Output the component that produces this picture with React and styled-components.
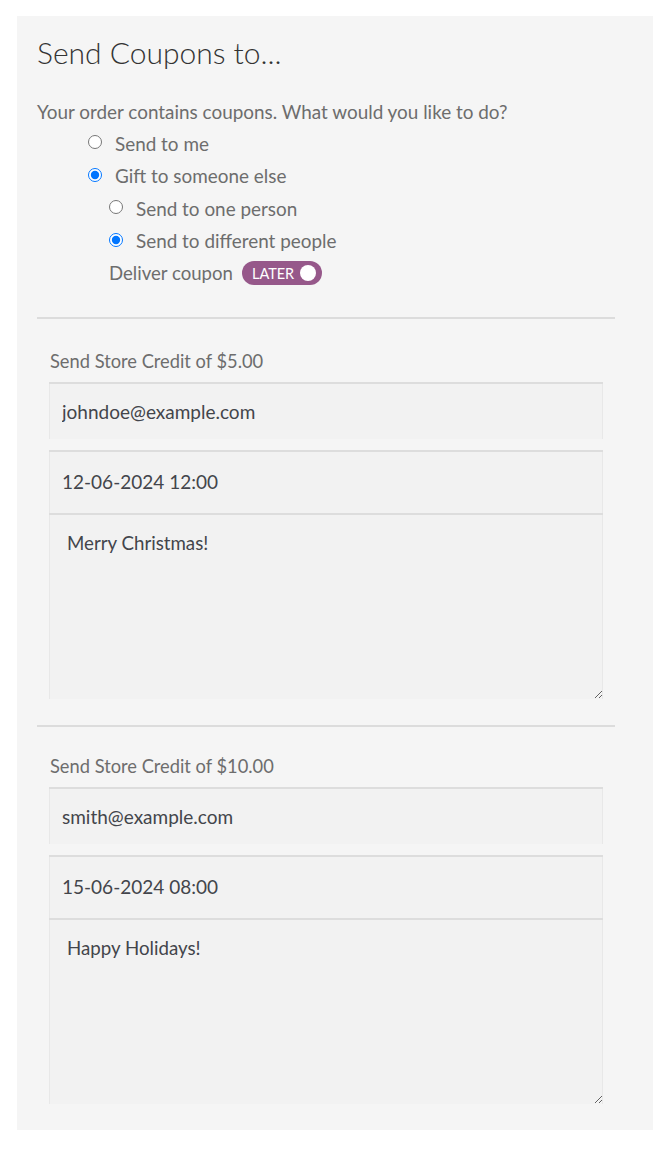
import React, { useState } from 'react';
import styled, { createGlobalStyle } from 'styled-components';

const GlobalStyle = createGlobalStyle`
  body {
    margin: 0;
    background: #ffffff;
    font-family: Lato, "Liberation Sans", sans-serif;
  }
`;

const Page = styled.div`
  padding: 16px 18px 21px 17px;
`;

const Panel = styled.div`
  background: #f5f5f5;
  padding: 18px 20px 26px 20px;
`;

const Title = styled.h2`
  margin: 0 0 30px;
  font-size: 30px;
  font-weight: 300;
  line-height: 36px;
  color: #333333;
`;

const Intro = styled.p`
  margin: 0 0 3px;
  font-size: 18.9px;
  line-height: 24px;
  color: #6d6d6d;
`;

const OptionList = styled.div`
  display: flex;
  flex-direction: column;
  padding-left: ${props => props.indent}px;
`;

const OptionRow = styled.label`
  display: flex;
  align-items: center;
  height: 32.5px;
  font-size: 18.9px;
  color: #6d6d6d;
  cursor: pointer;

  & input {
    margin: 0 13px 2px 0;
    width: 14px;
    height: 14px;
  }
`;

const DeliverRow = styled.div`
  display: flex;
  align-items: center;
  gap: 9px;
  height: 32px;
  font-size: 18.6px;
  color: #6d6d6d;
`;

const Toggle = styled.button`
  display: flex;
  align-items: center;
  justify-content: space-between;
  width: 80px;
  height: 24px;
  border: 0;
  border-radius: 12px;
  background: #96588a;
  padding: 0 6px 0 10px;
  color: #ffffff;
  font-family: Lato, "Liberation Sans", sans-serif;
  font-size: 14.5px;
  text-transform: uppercase;
  cursor: pointer;

  & span.knob {
    width: 16px;
    height: 16px;
    border-radius: 50%;
    background: #ffffff;
  }
`;

const Section = styled.div`
  margin: ${props => (props.first ? '28px' : '26px')} 18px 0 0;
  border-top: 2px solid #dcdcdc;
  padding: ${props => (props.first ? '30px' : '27px')} 12px 0;
  display: flex;
  flex-direction: column;
`;

const FieldLabel = styled.div`
  font-size: 18.3px;
  line-height: 24px;
  color: #6d6d6d;
  padding-left: 1px;
  margin-bottom: 9px;
`;

const TextField = styled.input`
  box-sizing: border-box;
  width: 100%;
  height: ${props => props.h}px;
  margin-bottom: ${props => props.gap}px;
  border: 0;
  border-top: 2px solid #dddddd;
  box-shadow: inset 1px 0 0 #e8e8e8, inset -1px 0 0 #e8e8e8;
  background: #f2f2f2;
  padding: 0 13px ${props => props.lift}px;
  font-family: Lato, "Liberation Sans", sans-serif;
  font-size: 19px;
  color: #43454b;
  outline: none;
`;

const MessageField = styled.textarea`
  box-sizing: border-box;
  width: 100%;
  height: 186px;
  margin: 0;
  border: 0;
  border-top: 2px solid #dddddd;
  box-shadow: inset 1px 0 0 #e8e8e8, inset -1px 0 0 #e8e8e8;
  background: #f2f2f2;
  padding: 16px 18px;
  font-family: Lato, "Liberation Sans", sans-serif;
  font-size: 18.7px;
  line-height: 24px;
  color: #43454b;
  outline: none;
  display: block;
`;

const coupons = [
  { amount: '$5.00', email: 'johndoe@example.com', date: '12-06-2024 12:00', message: 'Merry Christmas!' },
  { amount: '$10.00', email: 'smith@example.com', date: '15-06-2024 08:00', message: 'Happy Holidays!' }
];

function CouponSection({ coupon, first }) {
  return (
    <Section first={first}>
      <FieldLabel>Send Store Credit of {coupon.amount}</FieldLabel>
      <TextField h={57} gap={11} lift={0} defaultValue={coupon.email} />
      <TextField h={63} gap={0} lift={3} defaultValue={coupon.date} />
      <MessageField defaultValue={coupon.message} />
    </Section>
  );
}

export default function App() {
  const [sendTo, setSendTo] = useState('gift');
  const [giftMode, setGiftMode] = useState('many');

  return (
    <Page>
      <GlobalStyle />
      <Panel>
        <Title>Send Coupons to...</Title>
        <Intro>Your order contains coupons. What would you like to do?</Intro>
        <OptionList indent={51}>
          <OptionRow>
            <input type="radio" name="sendTo" checked={sendTo === 'me'} onChange={() => setSendTo('me')} />
            Send to me
          </OptionRow>
          <OptionRow>
            <input type="radio" name="sendTo" checked={sendTo === 'gift'} onChange={() => setSendTo('gift')} />
            Gift to someone else
          </OptionRow>
          <OptionList indent={21}>
            <OptionRow>
              <input type="radio" name="giftMode" checked={giftMode === 'one'} onChange={() => setGiftMode('one')} />
              Send to one person
            </OptionRow>
            <OptionRow>
              <input type="radio" name="giftMode" checked={giftMode === 'many'} onChange={() => setGiftMode('many')} />
              Send to different people
            </OptionRow>
            <DeliverRow>
              Deliver coupon
              <Toggle type="button">
                Later
                <span className="knob" />
              </Toggle>
            </DeliverRow>
          </OptionList>
        </OptionList>
        {coupons.map((c, i) => (
          <CouponSection key={i} coupon={c} first={i === 0} />
        ))}
      </Panel>
    </Page>
  );
}
